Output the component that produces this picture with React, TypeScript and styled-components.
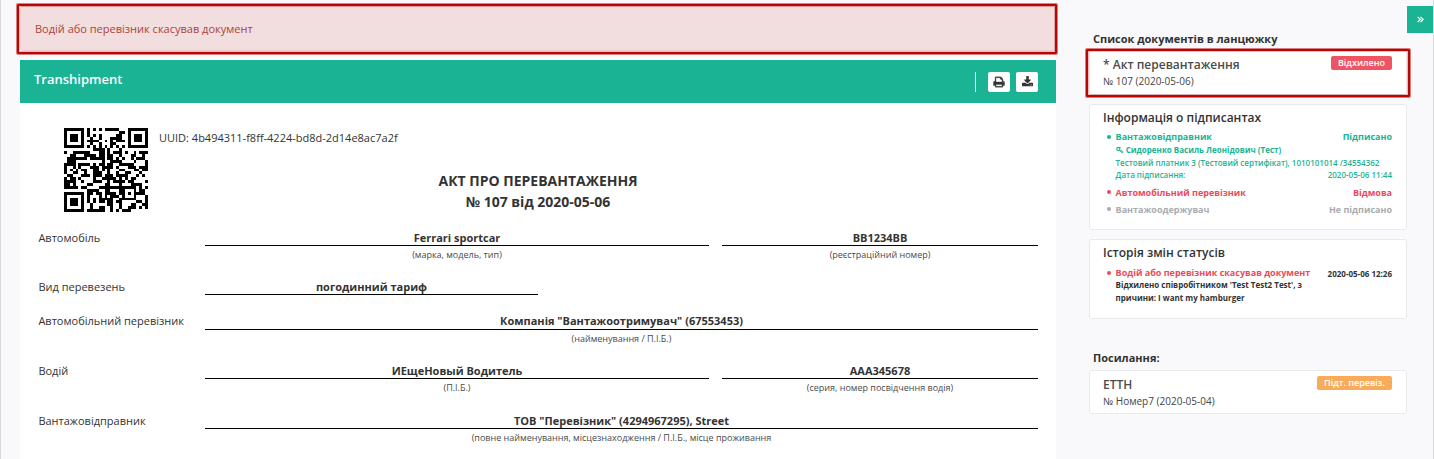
import React from "react";
import styled, { createGlobalStyle } from "styled-components";

const GREEN = "#1ab394";
const RED = "#ed4a5b";
const GREY = "#a9acaf";

const GlobalStyle = createGlobalStyle`
  * { box-sizing: border-box; }
  body {
    margin: 0;
    background: #f9f9fb;
    color: #333;
    font-family: "Open Sans", "Noto Sans", sans-serif;
    font-size: 11px;
    line-height: 15px;
  }
`;

const Page = styled.div`
  display: flex;
  height: 459px;
  overflow: hidden;
  border-left: 1px solid #d9d9dc;
  border-right: 1px solid #d9d9dc;
`;

const Main = styled.main`
  width: 1036px;
  margin-left: 19px;
  padding-top: 6px;
`;

const Highlight = styled.div<{ $inset: string }>`
  position: absolute;
  inset: ${(p) => p.$inset};
  border: 2px solid #b90504;
  border-radius: 1px;
  box-shadow: 0 0 0 1px rgba(185, 5, 4, 0.5), inset 0 0 0 1px rgba(185, 5, 4, 0.25);
  pointer-events: none;
`;

const Alert = styled.div`
  position: relative;
  height: 45px;
  padding: 14px;
  border: 1px solid #ebccd1;
  border-radius: 3px;
  background: #f2dede;
  color: #a94442;
`;

const DocumentHeader = styled.header`
  display: flex;
  align-items: center;
  height: 43px;
  margin-top: 9px;
  padding: 0 18px 0 14px;
  background: ${GREEN};
  color: #fff;
`;

const DocumentTitle = styled.h1`
  margin: 0 auto 5px 0;
  font-size: 13px;
  font-weight: 600;
`;

const Divider = styled.span`
  width: 1px;
  height: 20px;
  margin: 1px 12px 0 0;
  background: #fff;
`;

const IconButton = styled.button`
  display: flex;
  align-items: center;
  justify-content: center;
  width: 22px;
  height: 20px;
  margin: 1px 0 0 0;
  padding: 0;
  border: 0;
  border-radius: 2px;
  background: #fff;
  color: #333;

  & + & { margin-left: 6px; }
`;

const Sheet = styled.section`
  height: 400px;
  padding: 25px 18px 0;
  background: #fff;
`;

const Identity = styled.div`
  display: flex;
  height: 48px;
  padding-left: 26px;
`;

const Uuid = styled.div`
  margin: 2px 0 0 11px;
`;

const ActTitle = styled.h2`
  height: 42px;
  margin: -6px 0 0;
  font-size: 14px;
  line-height: 21px;
  text-align: center;
`;

const FormRow = styled.div<{ $top: number }>`
  display: flex;
  margin-top: ${(p) => p.$top}px;
`;

const Label = styled.div`
  width: 167px;
  padding-left: 0.4px;
`;

const Field = styled.div<{ $width: number; $gap?: number }>`
  width: ${(p) => p.$width}px;
  margin-left: ${(p) => p.$gap ?? 0}px;
  text-align: center;
`;

const Value = styled.div<{ $extra?: number }>`
  height: ${(p) => 16 + (p.$extra ?? 0)}px;
  border-bottom: 1px solid #000;
  font-weight: 700;
`;

const Caption = styled.div`
  height: 11px;
  margin-top: 3px;
  color: #4a4a4a;
  font-size: 9px;
  line-height: 12px;
`;

const Sidebar = styled.aside`
  width: 318px;
  margin-left: 33px;
  padding-top: 31px;
`;

const GroupTitle = styled.h3<{ $top?: number; $bottom?: number }>`
  margin: ${(p) => p.$top ?? 0}px 0 ${(p) => p.$bottom ?? 4}px 4px;
  font-size: 11px;
  line-height: 15px;
`;

const Card = styled.div<{ $height: number; $top?: number; $pad?: number }>`
  position: relative;
  height: ${(p) => p.$height}px;
  margin-top: ${(p) => p.$top ?? 0}px;
  padding: ${(p) => p.$pad ?? 5}px 14px 0 13px;
  border: 1px solid #e7eaec;
  border-radius: 3px;
  background: #fff;
`;

const Spread = styled.div`
  display: flex;
  justify-content: space-between;
`;

const CardTitle = styled.h4<{ $muted?: boolean }>`
  margin: 0;
  color: ${(p) => (p.$muted ? "#4c4c4c" : "#333")};
  font-size: 12px;
  font-weight: 600;
  line-height: 17px;
`;

const CardNumber = styled.div`
  color: #444;
  font-size: 10px;
  font-weight: 500;
  line-height: 17px;
`;

const Badge = styled.span<{ $color: string }>`
  height: 14px;
  padding: 0 7px;
  border-radius: 2px;
  background: ${(p) => p.$color};
  color: #fff;
  font-size: 9px;
  font-weight: 600;
  line-height: 14px;
`;

const Party = styled.div<{ $color: string; $top: number }>`
  display: flex;
  align-items: center;
  height: 13px;
  margin-top: ${(p) => p.$top}px;
  padding-left: 4px;
  color: ${(p) => p.$color};
  font-size: 9px;
  font-weight: 700;
  line-height: 13px;
`;

const Bullet = styled.i`
  width: 4px;
  height: 4px;
  margin: 0 4.6px 0 0;
  border-radius: 50%;
  background: currentColor;
`;

const PartyStatus = styled.span`
  margin-left: auto;
`;

const Detail = styled.div<{ $color: string; $weight: number; $height?: number }>`
  display: flex;
  align-items: center;
  height: ${(p) => p.$height ?? 13}px;
  margin-left: 12.6px;
  color: ${(p) => p.$color};
  font-size: 8px;
  font-weight: ${(p) => p.$weight};
  line-height: 12px;
  white-space: nowrap;
`;

const DateText = styled.time`
  margin-left: auto;
  color: inherit;
  font-size: 8px;
`;

const HistoryDate = styled(DateText)`
  padding-top: 2px;
  color: #333;
`;

const Toggle = styled.button`
  display: flex;
  align-items: center;
  justify-content: center;
  width: 26px;
  height: 27px;
  margin-top: 6px;
  padding: 0;
  border: 0;
  background: ${GREEN};
  color: #fff;
`;

const PrintIcon = () => (
  <svg width="12" height="12" viewBox="0 0 1792 1792" fill="currentColor" stroke="currentColor" strokeWidth="50">
    <path d="M448 1536h896v-256h-896v256zm0-640h896v-384h-160q-40 0-68-28t-28-68v-160h-640v640zm1152 64q0-26-19-45t-45-19-45 19-19 45 19 45 45 19 45-19 19-45zm128 0v416q0 13-9.5 22.5t-22.5 9.5h-224v160q0 40-28 68t-68 28h-960q-40 0-68-28t-28-68v-160h-224q-13 0-22.5-9.5t-9.5-22.5v-416q0-79 56.5-135.5t135.5-56.5h64v-544q0-40 28-68t68-28h672q40 0 88 20t76 48l152 152q28 28 48 76t20 88v256h64q79 0 135.5 56.5t56.5 135.5z" />
  </svg>
);

const DownloadIcon = () => (
  <svg width="11" height="12" viewBox="0 0 1664 1792" fill="currentColor">
    <path d="M1280 1344q0-26-19-45t-45-19-45 19-19 45 19 45 45 19 45-19 19-45zm256 0q0-26-19-45t-45-19-45 19-19 45 19 45 45 19 45-19 19-45zm128-224v320q0 40-28 68t-68 28h-1472q-40 0-68-28t-28-68v-320q0-40 28-68t68-28h465l135 136q58 56 136 56t136-56l136-136h464q40 0 68 28t28 68zm-325-569q17 41-14 70l-448 448q-18 19-45 19t-45-19l-448-448q-31-29-14-70 17-39 59-39h256v-448q0-26 19-45t45-19h256q26 0 45 19t19 45v448h256q42 0 59 39z" />
  </svg>
);

const DoubleAngleIcon = () => (
  <svg width="7" height="7" viewBox="0 0 7 7" fill="none" stroke="currentColor" strokeWidth="1.2">
    <path d="M0.7 0.8L3.3 3.5L0.7 6.2M3.5 0.8L6.1 3.5L3.5 6.2" />
  </svg>
);

const KeyIcon = () => (
  <svg width="8" height="8" viewBox="0 0 8 8" fill="none" stroke="currentColor" strokeWidth="1.1">
    <circle cx="2.3" cy="3" r="1.6" />
    <path d="M3.4 4.1L6.6 6.8M4.8 5.2L5.7 4.3M6 6.3L6.9 5.4M3 1.6H4.6" />
  </svg>
);

/* Byte-mode QR code, version 3, level M, one error-correction block. */
function buildQr(text: string, mask: number): boolean[][] {
  const size = 29;
  const dataLength = 44;
  const eccLength = 26;
  const bits: number[] = [];
  const put = (value: number, length: number) => {
    for (let i = length - 1; i >= 0; i--) bits.push((value >> i) & 1);
  };
  put(4, 4);
  put(text.length, 8);
  for (const ch of text) put(ch.charCodeAt(0), 8);
  put(0, 4);
  while (bits.length % 8) bits.push(0);
  const data: number[] = [];
  for (let i = 0; i < bits.length; i += 8) data.push(parseInt(bits.slice(i, i + 8).join(""), 2));
  for (let pad = 0xec; data.length < dataLength; pad ^= 0xfd) data.push(pad);

  const mul = (a: number, b: number) => {
    let z = 0;
    for (let i = 7; i >= 0; i--) {
      z = (z << 1) ^ ((z >> 7) * 0x11d);
      z ^= ((b >> i) & 1) * a;
    }
    return z;
  };
  const divisor: number[] = new Array(eccLength).fill(0);
  divisor[eccLength - 1] = 1;
  let root = 1;
  for (let i = 0; i < eccLength; i++) {
    for (let j = 0; j < eccLength; j++) {
      divisor[j] = mul(divisor[j], root);
      if (j + 1 < eccLength) divisor[j] ^= divisor[j + 1];
    }
    root = mul(root, 2);
  }
  const ecc: number[] = new Array(eccLength).fill(0);
  for (const byte of data) {
    const factor = byte ^ ecc.shift()!;
    ecc.push(0);
    divisor.forEach((d, i) => { ecc[i] ^= mul(d, factor); });
  }
  const codewords = [...data, ...ecc];

  const grid: boolean[][] = Array.from({ length: size }, () => new Array(size).fill(false));
  const fixed: boolean[][] = Array.from({ length: size }, () => new Array(size).fill(false));
  const set = (x: number, y: number, dark: boolean) => {
    if (x < 0 || y < 0 || x >= size || y >= size) return;
    grid[y][x] = dark;
    fixed[y][x] = true;
  };
  for (let i = 0; i < size; i++) {
    set(6, i, i % 2 === 0);
    set(i, 6, i % 2 === 0);
  }
  for (const [cx, cy] of [[3, 3], [size - 4, 3], [3, size - 4]]) {
    for (let dy = -4; dy <= 4; dy++) {
      for (let dx = -4; dx <= 4; dx++) {
        const d = Math.max(Math.abs(dx), Math.abs(dy));
        set(cx + dx, cy + dy, d !== 2 && d !== 4);
      }
    }
  }
  for (let dy = -2; dy <= 2; dy++) {
    for (let dx = -2; dx <= 2; dx++) set(22 + dx, 22 + dy, Math.max(Math.abs(dx), Math.abs(dy)) !== 1);
  }
  let rem = mask;
  for (let i = 0; i < 10; i++) rem = (rem << 1) ^ ((rem >> 9) * 0x537);
  const format = ((mask << 10) | rem) ^ 0x5412;
  const bit = (i: number) => ((format >> i) & 1) !== 0;
  for (let i = 0; i <= 5; i++) set(8, i, bit(i));
  set(8, 7, bit(6));
  set(8, 8, bit(7));
  set(7, 8, bit(8));
  for (let i = 9; i < 15; i++) set(14 - i, 8, bit(i));
  for (let i = 0; i < 8; i++) set(size - 1 - i, 8, bit(i));
  for (let i = 8; i < 15; i++) set(8, size - 15 + i, bit(i));
  set(8, size - 8, true);

  let k = 0;
  for (let right = size - 1; right >= 1; right -= 2) {
    if (right === 6) right = 5;
    for (let v = 0; v < size; v++) {
      for (let j = 0; j < 2; j++) {
        const x = right - j;
        const y = ((right + 1) & 2) === 0 ? size - 1 - v : v;
        if (fixed[y][x]) continue;
        const dark = k < codewords.length * 8 && ((codewords[k >> 3] >> (7 - (k & 7))) & 1) !== 0;
        const flip = (((x * y) % 2) + ((x * y) % 3)) % 2 === 0;
        grid[y][x] = dark !== flip;
        k++;
      }
    }
  }
  return grid;
}

const UUID = "4b494311-f8ff-4224-bd8d-2d14e8ac7a2f";
const qrPath = buildQr(UUID, 6)
  .flatMap((row, y) => row.map((dark, x) => (dark ? `M${x} ${y}h1v1h-1z` : "")))
  .join("");

const QrCode = () => (
  <svg width="84" height="84" viewBox="0 0 29 29" shapeRendering="crispEdges">
    <path d={qrPath} fill="#000" />
  </svg>
);

export default function App() {
  return (
    <>
      <GlobalStyle />
      <Page>
        <Main>
          <Alert>
            Водій або перевізник скасував документ
            <Highlight $inset="-3px -2px -4px -4px" />
          </Alert>
          <DocumentHeader>
            <DocumentTitle>Transhipment</DocumentTitle>
            <Divider />
            <IconButton aria-label="Друк"><PrintIcon /></IconButton>
            <IconButton aria-label="Завантажити"><DownloadIcon /></IconButton>
          </DocumentHeader>
          <Sheet>
            <Identity>
              <QrCode />
              <Uuid>UUID: {UUID}</Uuid>
            </Identity>
            <ActTitle>
              АКТ ПРО ПЕРЕВАНТАЖЕННЯ
              <br />№ 107 від 2020-05-06
            </ActTitle>
            <FormRow $top={18}>
              <Label>Автомобіль</Label>
              <Field $width={504}>
                <Value>Ferrari sportcar</Value>
                <Caption>(марка, модель, тип)</Caption>
              </Field>
              <Field $width={316} $gap={13}>
                <Value>BB1234BB</Value>
                <Caption>(реєстраційний номер)</Caption>
              </Field>
            </FormRow>
            <FormRow $top={19}>
              <Label>Вид перевезень</Label>
              <Field $width={333}>
                <Value>погодинний тариф</Value>
              </Field>
            </FormRow>
            <FormRow $top={18}>
              <Label>Автомобільний перевізник</Label>
              <Field $width={833}>
                <Value $extra={1}>Компанія "Вантажоотримувач" (67553453)</Value>
                <Caption>(найменування / П.І.Б.)</Caption>
              </Field>
            </FormRow>
            <FormRow $top={19}>
              <Label>Водій</Label>
              <Field $width={504}>
                <Value>ИЕщеНовый Водитель</Value>
                <Caption>(П.І.Б.)</Caption>
              </Field>
              <Field $width={316} $gap={13}>
                <Value>AAA345678</Value>
                <Caption>(серия, номер посвідчення водія)</Caption>
              </Field>
            </FormRow>
            <FormRow $top={20}>
              <Label>Вантажовідправник</Label>
              <Field $width={833}>
                <Value>ТОВ "Перевізник" (4294967295), Street</Value>
                <Caption>(повне найменування, місцезнаходження / П.І.Б., місце проживання</Caption>
              </Field>
            </FormRow>
          </Sheet>
        </Main>
        <Sidebar>
          <GroupTitle>Список документів в ланцюжку</GroupTitle>
          <Card $height={45}>
            <Spread>
              <CardTitle $muted>* Акт перевантаження</CardTitle>
              <Badge $color="#ed5565">Відхилено</Badge>
            </Spread>
            <CardNumber>№ 107 (2020-05-06)</CardNumber>
            <Highlight $inset="-2px -4px -3px -4px" />
          </Card>
          <Card $height={126} $top={9} $pad={4}>
            <CardTitle>Інформація о підписантах</CardTitle>
            <Party $color={GREEN} $top={4}>
              <Bullet />Вантажовідправник<PartyStatus>Підписано</PartyStatus>
            </Party>
            <Detail $color={GREEN} $weight={700}>
              <KeyIcon />&nbsp;Сидоренко Василь Леонідович (Тест)
            </Detail>
            <Detail $color={GREEN} $weight={600}>
              Тестовий платник 3 (Тестовий сертифікат), 1010101014 /34554362
            </Detail>
            <Detail $color={GREEN} $weight={600} $height={12}>
              Дата підписання:<DateText>2020-05-06 11:44</DateText>
            </Detail>
            <Party $color={RED} $top={4.5}>
              <Bullet />Автомобільний перевізник<PartyStatus>Відмова</PartyStatus>
            </Party>
            <Party $color={GREY} $top={4}>
              <Bullet />Вантажоодержувач<PartyStatus>Не підписано</PartyStatus>
            </Party>
          </Card>
          <Card $height={80} $top={9} $pad={4}>
            <CardTitle>Історія змін статусів</CardTitle>
            <Party $color={RED} $top={5}>
              <Bullet />Водій або перевізник скасував документ
              <HistoryDate>2020-05-06 12:26</HistoryDate>
            </Party>
            <Detail $color="#333" $weight={700} $height={12}>Відхилено співробітником 'Test Test2 Test', з</Detail>
            <Detail $color="#333" $weight={700}>причини: I want my hamburger</Detail>
          </Card>
          <GroupTitle $top={31} $bottom={5}>Посилання:</GroupTitle>
          <Card $height={44}>
            <Spread>
              <CardTitle $muted>ЕТТН</CardTitle>
              <Badge $color="#f8ac59">Підт. перевіз.</Badge>
            </Spread>
            <CardNumber>№ Номер7 (2020-05-04)</CardNumber>
          </Card>
        </Sidebar>
        <Toggle aria-label="Згорнути"><DoubleAngleIcon /></Toggle>
      </Page>
    </>
  );
}
